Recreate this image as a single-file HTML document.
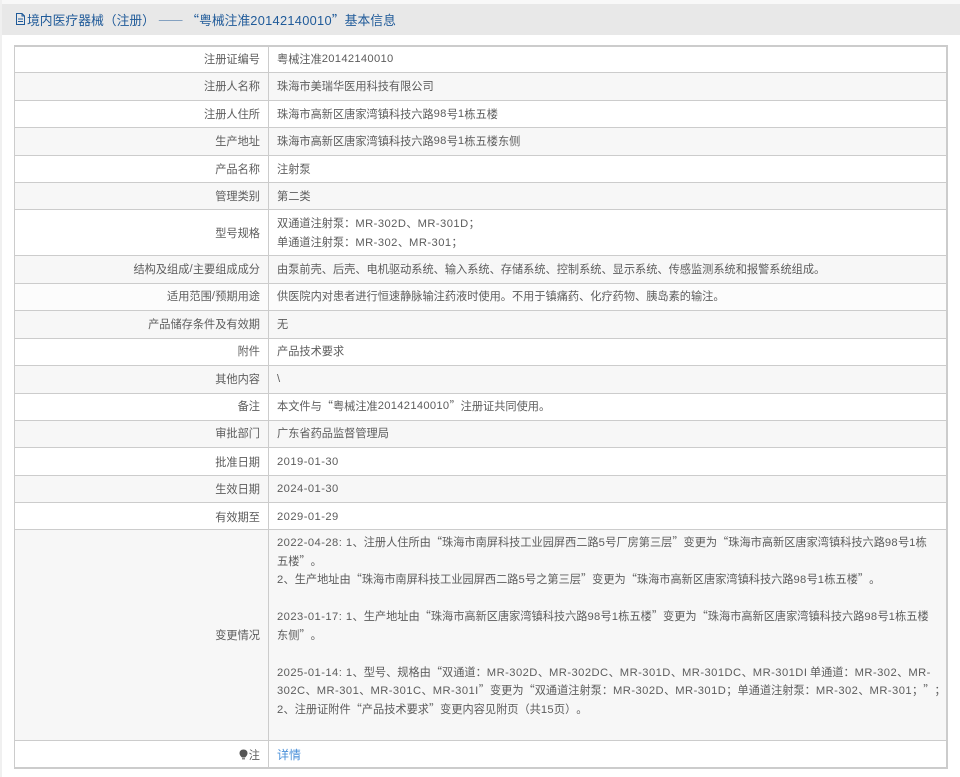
<!DOCTYPE html>
<html lang="zh-CN">
<head>
<meta charset="utf-8">
<title>基本信息</title>
<style>
html,body{margin:0;padding:0;background:#fff;width:960px;height:777px;overflow:hidden}
body{position:relative;font-family:"Noto Sans CJK SC","Liberation Sans",sans-serif;font-size:11.2px;color:#5c5c5c;text-spacing-trim:space-all;font-kerning:none}
i,s{font-family:"Liberation Sans",sans-serif;font-style:normal;letter-spacing:.3px;text-decoration:none}
s{letter-spacing:.45px}
b{font-family:"Noto Sans CJK TC",sans-serif;font-weight:normal}
.side{position:absolute;left:0;top:0;width:2px;height:777px;background:#f0f0f0}
.top{position:absolute;left:0;top:0;width:960px;height:4px;background:#f8f8f8}
.head{position:absolute;left:2px;top:4px;width:958px;height:31px;background:#e8e8e8;color:#1f5a99;font-size:12.8px;line-height:31px;white-space:nowrap}
.head svg{position:absolute;left:13px;top:9px}
.head span{position:absolute;left:25px;top:0}
.t{position:absolute;left:14px;top:45px;width:934px;height:724px;box-sizing:border-box;border:1px solid #ccc;border-width:1px 2px 2px 1px}
.r{position:absolute;left:15px;width:931px;border-top:1px solid #ccc;box-sizing:border-box}
.g{background:#f7f7f7}
.l{position:absolute;left:0;width:245px;text-align:right;top:0;bottom:0;display:flex;align-items:center;justify-content:flex-end;white-space:nowrap}
.v{position:absolute;left:262px;top:0;bottom:0;display:flex;align-items:center;white-space:nowrap}
.u .l,.u .v{bottom:2px}
.w .l,.w .v{top:2px}
.d{position:absolute;left:268px;top:45px;width:1px;height:723px;background:#ccc}
.m{white-space:nowrap;width:664px;display:block}
.m div{height:18.55px;line-height:18px}
a{color:#4a90d9;text-decoration:none;font-size:12px}
</style>
</head>
<body>
<div class="top"></div>
<div class="side"></div>
<div class="head"><svg width="11" height="12" viewBox="0 0 11 12" fill="none" stroke="#1f5a99" stroke-width="1"><path d="M1.5 .5H7L9.5 3V11.5H1.5Z"/><path d="M7 .5V3H9.5M3 6H8M3 8.5H8"/></svg><span>境内医疗器械（注册） —— “粤械注准<i>20142140010</i>”基本信息</span></div>
<div class="t"></div>
<div class="r u" style="top:46px;height:26px"><div class="l">注册证编号</div><div class="v">粤械注准<i>20142140010</i></div></div>
<div class="r g u" style="top:72px;height:28px"><div class="l">注册人名称</div><div class="v">珠海市美瑞华医用科技有限公司</div></div>
<div class="r" style="top:100px;height:27px"><div class="l">注册人住所</div><div class="v">珠海市高新区唐家湾镇科技六路<i>98</i>号<i>1</i>栋五楼</div></div>
<div class="r g u" style="top:127px;height:28px"><div class="l">生产地址</div><div class="v">珠海市高新区唐家湾镇科技六路<i>98</i>号<i>1</i>栋五楼东侧</div></div>
<div class="r" style="top:155px;height:27px"><div class="l">产品名称</div><div class="v">注射泵</div></div>
<div class="r g" style="top:182px;height:27px"><div class="l">管理类别</div><div class="v">第二类</div></div>
<div class="r" style="top:209px;height:46px"><div class="l">型号规格</div><div class="v"><div class="m"><div style="height:19px">双通道注射泵<b>：</b><s>MR-302D</s>、<s>MR-301D</s><b>；</b></div><div>单通道注射泵<b>：</b><s>MR-302</s>、<s>MR-301</s><b>；</b></div></div></div></div>
<div class="r g u" style="top:255px;height:28px"><div class="l">结构及组成<i>/</i>主要组成成分</div><div class="v">由泵前壳、后壳、电机驱动系统、输入系统、存储系统、控制系统、显示系统、传感监测系统和报警系统组成。</div></div>
<div class="r u" style="top:283px;height:27px;background:#fcfcfc"><div class="l">适用范围<i>/</i>预期用途</div><div class="v">供医院内对患者进行恒速静脉输注药液时使用。不用于镇痛药、化疗药物、胰岛素的输注。</div></div>
<div class="r g u" style="top:310px;height:28px"><div class="l">产品储存条件及有效期</div><div class="v">无</div></div>
<div class="r u" style="top:338px;height:27px"><div class="l">附件</div><div class="v">产品技术要求</div></div>
<div class="r g u" style="top:365px;height:28px"><div class="l">其他内容</div><div class="v"><i>\</i></div></div>
<div class="r u" style="top:393px;height:27px"><div class="l">备注</div><div class="v">本文件与“粤械注准<i>20142140010</i>”注册证共同使用。</div></div>
<div class="r g u" style="top:420px;height:27px"><div class="l">审批部门</div><div class="v">广东省药品监督管理局</div></div>
<div class="r" style="top:447px;height:28px"><div class="l">批准日期</div><div class="v"><s>2019-01-30</s></div></div>
<div class="r g" style="top:475px;height:27px"><div class="l">生效日期</div><div class="v"><s>2024-01-30</s></div></div>
<div class="r w" style="top:502px;height:27px"><div class="l">有效期至</div><div class="v"><s>2029-01-29</s></div></div>
<div class="r g" style="top:529px;height:211px"><div class="l">变更情况</div><div class="v" style="align-items:flex-start;top:3px"><div class="m">
<div><s>2022-04-28: 1</s>、注册人住所由“珠海市南屏科技工业园屏西二路<i>5</i>号厂房第三层”变更为“珠海市高新区唐家湾镇科技六路<i>98</i>号<i>1</i>栋</div>
<div>五楼”。</div>
<div><i>2</i>、生产地址由“珠海市南屏科技工业园屏西二路<i>5</i>号之第三层”变更为“珠海市高新区唐家湾镇科技六路<i>98</i>号<i>1</i>栋五楼”。</div>
<div></div>
<div><s>2023-01-17: 1</s>、生产地址由“珠海市高新区唐家湾镇科技六路<i>98</i>号<i>1</i>栋五楼”变更为“珠海市高新区唐家湾镇科技六路<i>98</i>号<i>1</i>栋五楼</div>
<div>东侧”。</div>
<div></div>
<div><s>2025-01-14: 1</s>、型号、规格由“双通道<b>：</b><s>MR-302D</s>、<s>MR-302DC</s>、<s>MR-301D</s>、<s>MR-301DC</s>、<s>MR-301DI</s> 单通道<b>：</b><s>MR-302</s>、<s>MR-</s></div>
<div><s>302C</s>、<s>MR-301</s>、<s>MR-301C</s>、<s>MR-301I</s>”变更为“双通道注射泵<b>：</b><s>MR-302D</s>、<s>MR-301D</s><b>；</b>单通道注射泵<b>：</b><s>MR-302</s>、<s>MR-301</s><b>；</b>”<b>；</b></div>
<div><i>2</i>、注册证附件“产品技术要求”变更内容见附页（共<i>15</i>页）。</div>
</div></div></div>
<div class="r" style="top:740px;height:28px"><div class="l"><svg width="9" height="11" viewBox="0 0 9 11" style="margin-right:1px"><path d="M4.5 .5C2 .5.5 2.2.5 4.2.5 6 2 7.5 3 8.5H6C7 7.5 8.5 6 8.5 4.2 8.5 2.2 7 .5 4.5.5Z" fill="#555"/><rect x="3" y="9" width="3" height="1.5" fill="#888"/></svg>注</div><div class="v"><a href="#">详情</a></div></div>
<div class="d"></div>
</body>
</html>
